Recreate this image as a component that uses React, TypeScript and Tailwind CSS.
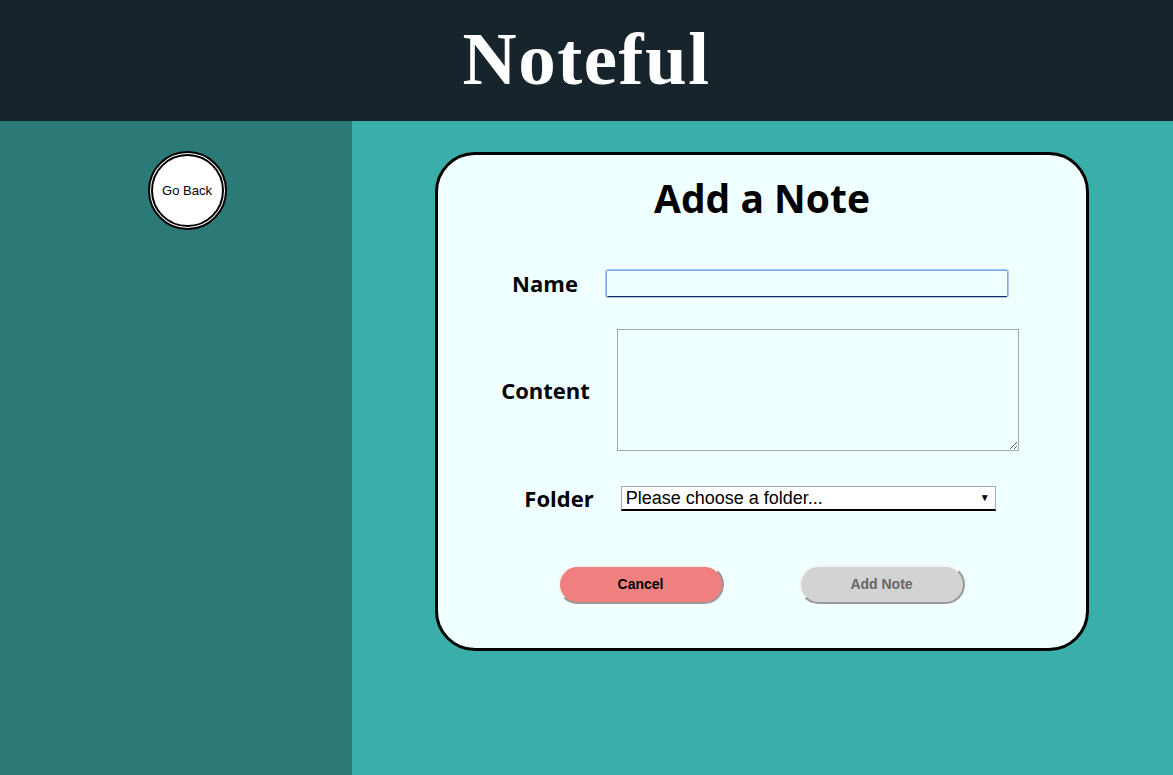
import React from "react";

export default function App() {
  return (
    <div className="flex h-[775px] w-full flex-col overflow-hidden font-['Open_Sans',sans-serif]">
      {/* Header */}
      <header className="flex h-[121px] shrink-0 items-center justify-center bg-[#18242b]">
        <h1 className="mt-[-4px] font-['Liberation_Serif',serif] text-[75px] font-bold leading-none tracking-[1.5px] text-white">
          Noteful
        </h1>
      </header>

      <div className="flex flex-1">
        {/* Sidebar */}
        <aside className="flex w-[352px] shrink-0 justify-center bg-[#2c7a77] pl-[22px] pt-[30px]">
          <button className="flex h-[79px] w-[79px] items-center justify-center rounded-full border-[5px] border-double border-black bg-white font-['Liberation_Sans',sans-serif] text-[13px] text-black">
            Go Back
          </button>
        </aside>

        {/* Main */}
        <main className="flex flex-1 bg-[#3aafa9] pl-[83px] pt-[31px]">
          <form className="flex h-[499px] w-[654px] flex-col items-center rounded-[40px] border-[3px] border-black bg-[#f0ffff]">
            <h2 className="mt-[18px] text-[39px] font-bold leading-[50px] text-black">Add a Note</h2>

            <div className="mr-[4px] mt-[44px] flex items-center justify-center gap-[28px]">
              <label className="text-[22px] font-bold text-black">Name</label>
              <input
                type="text"
                className="h-[27px] w-[402px] rounded-[2px] border border-[#7fa5ea] border-b-[#1a2a50] bg-[#f0ffff] outline outline-1 outline-[#a9c2f0]"
              />
            </div>

            <div className="mr-[4px] mt-[29px] flex items-center justify-center gap-[27px]">
              <label className="text-[22px] font-bold text-black">Content</label>
              <textarea className="h-[122px] w-[402px] resize border border-[#a9a9a9] bg-[#f0ffff]" />
            </div>

            <div className="mr-[4px] mt-[31px] flex items-center justify-center gap-[27px]">
              <label className="text-[22px] font-bold text-black">Folder</label>
              <div className="relative flex h-[25px] w-[375px] items-center border border-[#a9a9a9] border-b-2 border-b-black bg-white pl-[4px] font-['Liberation_Sans',sans-serif] text-[18px] text-black">
                Please choose a folder...
                <span className="absolute right-[5px] top-[3px] text-[10px]">▼</span>
              </div>
            </div>

            <div className="mr-[2px] mt-[50px] flex gap-[75px] font-['Liberation_Sans',sans-serif]">
              <button
                type="button"
                className="h-[39px] w-[166px] rounded-full border-2 border-[#f4f4f4] border-r-[#999] border-b-[#999] bg-[#f08080] text-[14px] font-bold text-black"
              >
                Cancel
              </button>
              <button
                type="button"
                className="h-[39px] w-[166px] rounded-full border-2 border-[#f4f4f4] border-r-[#999] border-b-[#999] bg-[#d3d3d3] text-[14px] font-bold text-[#666]"
              >
                Add Note
              </button>
            </div>
          </form>
        </main>
      </div>
    </div>
  );
}
